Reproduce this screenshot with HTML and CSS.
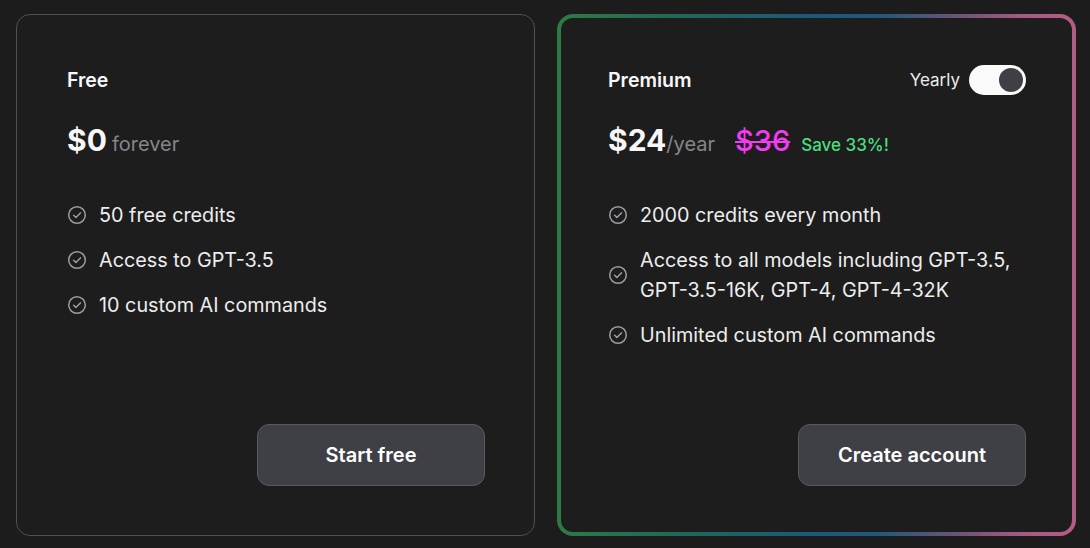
FILE: index.html
```html
<!DOCTYPE html>
<html lang="en">
<head>
<meta charset="utf-8">
<title>Pricing</title>
<link rel="stylesheet" href="styles.css">
</head>
<body>
<main class="plans">
  <section class="card">
    <div class="head">
      <h2 class="name">Free</h2>
    </div>
    <div class="price">
      <span class="amount">$0</span><span class="per spaced">forever</span>
    </div>
    <ul class="features">
      <li><svg class="check" viewBox="0 0 20 20"><circle cx="10" cy="10" r="8.3"/><path d="M6.6 10.2l2.3 2.3 4.5-4.6"/></svg><span>50 free credits</span></li>
      <li><svg class="check" viewBox="0 0 20 20"><circle cx="10" cy="10" r="8.3"/><path d="M6.6 10.2l2.3 2.3 4.5-4.6"/></svg><span>Access to GPT-3.5</span></li>
      <li><svg class="check" viewBox="0 0 20 20"><circle cx="10" cy="10" r="8.3"/><path d="M6.6 10.2l2.3 2.3 4.5-4.6"/></svg><span>10 custom AI commands</span></li>
    </ul>
    <button class="cta">Start free</button>
  </section>
  <section class="card premium">
    <div class="head">
      <h2 class="name">Premium</h2>
      <div class="billing">
        <span>Yearly</span>
        <span class="toggle"><span class="knob"></span></span>
      </div>
    </div>
    <div class="price">
      <span class="amount">$24</span><span class="per">/year</span>
      <s class="old">$36</s>
      <span class="save">Save 33%!</span>
    </div>
    <ul class="features">
      <li><svg class="check" viewBox="0 0 20 20"><circle cx="10" cy="10" r="8.3"/><path d="M6.6 10.2l2.3 2.3 4.5-4.6"/></svg><span>2000 credits every month</span></li>
      <li><svg class="check" viewBox="0 0 20 20"><circle cx="10" cy="10" r="8.3"/><path d="M6.6 10.2l2.3 2.3 4.5-4.6"/></svg><span>Access to all models including GPT-3.5,<br>GPT-3.5-16K, GPT-4, GPT-4-32K</span></li>
      <li><svg class="check" viewBox="0 0 20 20"><circle cx="10" cy="10" r="8.3"/><path d="M6.6 10.2l2.3 2.3 4.5-4.6"/></svg><span>Unlimited custom AI commands</span></li>
    </ul>
    <button class="cta">Create account</button>
  </section>
</main>
</body>
</html>
```

FILE: styles.css
```css
* { box-sizing: border-box; }
html, body { margin: 0; height: 100%; }
body {
  background: #1c1c1c;
  color: #f4f4f5;
  font-family: Inter, "Noto Sans", "Liberation Sans", sans-serif;
  padding: 14px 14px 12px 16px;
}
.plans {
  display: grid;
  grid-template-columns: 1fr 1fr;
  gap: 22px;
  height: 522px;
}
.card {
  display: flex;
  flex-direction: column;
  border: 1px solid #505052;
  border-radius: 14px;
  padding: 50px 49px 49px 50px;
  background: #1d1d1d;
}
.card.premium {
  border: 4px solid transparent;
  border-radius: 16px;
  padding: 47px 46px 46px 47px;
  background:
    linear-gradient(#1d1d1d, #1d1d1d) padding-box,
    linear-gradient(90deg, #2f7a44 0%, #1f6a56 22%, #1b5a78 48%, #21587a 62%, #6e5577 78%, #a85a82 90%, #b25d86 100%) border-box;
}
.head {
  display: flex;
  align-items: center;
  justify-content: space-between;
  height: 30px;
}
.name {
  margin: 0;
  font-size: 19.5px;
  font-weight: 600;
  color: #f7f7f7;
}
.billing {
  display: flex;
  align-items: center;
  gap: 9px;
  font-size: 17px;
  color: #ececec;
}
.toggle {
  display: flex;
  align-items: center;
  justify-content: flex-end;
  width: 57px;
  height: 30px;
  border-radius: 15px;
  background: #fafafa;
  padding: 0 3px;
}
.knob {
  width: 24px;
  height: 24px;
  border-radius: 50%;
  background: #3f3f46;
}
.price {
  display: flex;
  align-items: baseline;
  margin-top: 27px;
  height: 38px;
}
.amount {
  font-size: 30px;
  font-weight: 700;
  color: #f7f7f7;
}
.per {
  font-size: 20px;
  color: #86868b;
}
.per.spaced { margin-left: 5px; }
.old {
  margin-left: 20px;
  font-size: 29px;
  font-weight: 500;
  color: #f23cf0;
  text-decoration-thickness: 2px;
}
.save {
  margin-left: 11px;
  font-size: 17px;
  font-weight: 500;
  color: #4ade80;
}
.features {
  list-style: none;
  margin: 40px 0 0;
  padding: 0;
  display: flex;
  flex-direction: column;
  gap: 15px;
}
.features li {
  display: flex;
  align-items: center;
  gap: 12px;
  font-size: 19.8px;
  line-height: 30px;
  color: #ededed;
}
.check {
  flex: none;
  width: 20px;
  height: 20px;
  fill: none;
  stroke: #9c9ca0;
  stroke-width: 1.5;
  stroke-linecap: round;
  stroke-linejoin: round;
}
.cta {
  margin-top: auto;
  align-self: flex-end;
  width: 228px;
  height: 62px;
  border: 1px solid #5a5a5e;
  border-radius: 12px;
  background: #3f3f46;
  color: #ffffff;
  font-family: inherit;
  font-size: 20px;
  font-weight: 600;
  cursor: pointer;
}
```
